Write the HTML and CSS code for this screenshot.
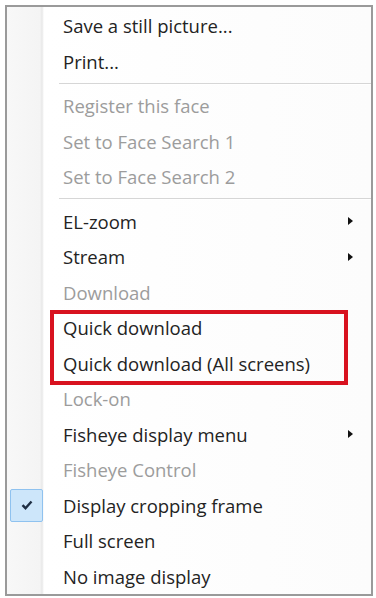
FILE: index.html
```html
<!DOCTYPE html>
<html lang="en">
<head>
  <meta charset="UTF-8">
  <title>Context menu</title>
  <link rel="stylesheet" href="styles.css">
</head>
<body>

  <div class="menu">
    <div class="item"><span class="icon"></span><span class="label">Save a still picture...</span></div>
    <div class="item"><span class="icon"></span><span class="label">Print...</span></div>
    <div class="sep"></div>
    <div class="item disabled"><span class="icon"></span><span class="label">Register this face</span></div>
    <div class="item disabled"><span class="icon"></span><span class="label">Set to Face Search 1</span></div>
    <div class="item disabled"><span class="icon"></span><span class="label">Set to Face Search 2</span></div>
    <div class="sep"></div>
    <div class="item"><span class="icon"></span><span class="label">EL-zoom</span><span class="arrow"></span></div>
    <div class="item"><span class="icon"></span><span class="label">Stream</span><span class="arrow"></span></div>
    <div class="item disabled"><span class="icon"></span><span class="label">Download</span></div>

    <!-- marcado en rojo -->
    <div class="highlight">
      <div class="item"><span class="icon"></span><span class="label">Quick download</span></div>
      <div class="item"><span class="icon"></span><span class="label">Quick download (All screens)</span></div>
    </div>

    <div class="item disabled"><span class="icon"></span><span class="label">Lock-on</span></div>
    <div class="item"><span class="icon"></span><span class="label">Fisheye display menu</span><span class="arrow"></span></div>
    <div class="item disabled"><span class="icon"></span><span class="label">Fisheye Control</span></div>
    <div class="item checked">
      <span class="icon">
        <span class="check">
          <svg width="12" height="10" viewBox="0 0 12 10">
            <path d="M1.5 5.2 L4.5 8.2 L10.5 1.5" fill="none" stroke="#1f2f44" stroke-width="2.4"/>
          </svg>
        </span>
      </span>
      <span class="label">Display cropping frame</span>
    </div>
    <div class="item"><span class="icon"></span><span class="label">Full screen</span></div>
    <div class="item"><span class="icon"></span><span class="label">No image display</span></div>
  </div>

</body>
</html>
```

FILE: styles.css
```css
:root {
  --text-color: #232323;
  --disabled-color: #9c9c9c;
  --border-color: #9a9a9a;
  --sep-color: #d6d6d6;
  --red: #d8121f;
}

body {
  margin: 0;
  background: #ffffff;
  font-family: "Open Sans", "Noto Sans", sans-serif;
}

.menu {
  margin: 5px 0 0 5px;
  width: 364px;
  padding-top: 1px;
  border: 2px solid var(--border-color);
  background:
    linear-gradient(to right, #f8f8f8 0, #f4f4f4 33px, #e8e8e8 35px, #ffffff 37px, #fcfcfc 100%);
}

.item {
  display: flex;
  align-items: center;
  height: 35.5px;
  font-size: 18.5px;
  color: var(--text-color);
}

.item.disabled {
  color: var(--disabled-color);
}

.icon {
  width: 53px;
  padding-left: 3px;
  flex-shrink: 0;
  display: flex;
  align-items: center;
}

.check {
  width: 31px;
  height: 31px;
  border: 1px solid #8fc2ef;
  border-radius: 2px;
  background: #cde6fa;
  display: flex;
  align-items: center;
  justify-content: center;
}

.label {
  flex: 1;
  white-space: nowrap;
}

.arrow {
  width: 0;
  height: 0;
  margin-right: 18px;
  border-top: 4px solid transparent;
  border-bottom: 4px solid transparent;
  border-left: 5px solid #111;
}

.sep {
  height: 9px;
  margin-left: 52px;
  display: flex;
  flex-direction: column;
  justify-content: center;
}

.sep::before {
  content: "";
  height: 1px;
  background: var(--sep-color);
  border-bottom: 1px solid #ffffff;
}

.highlight {
  position: relative;
}

.highlight::after {
  content: "";
  position: absolute;
  left: 43px;
  right: 23px;
  top: 0;
  bottom: -4px;
  border: 4px solid var(--red);
}
```
